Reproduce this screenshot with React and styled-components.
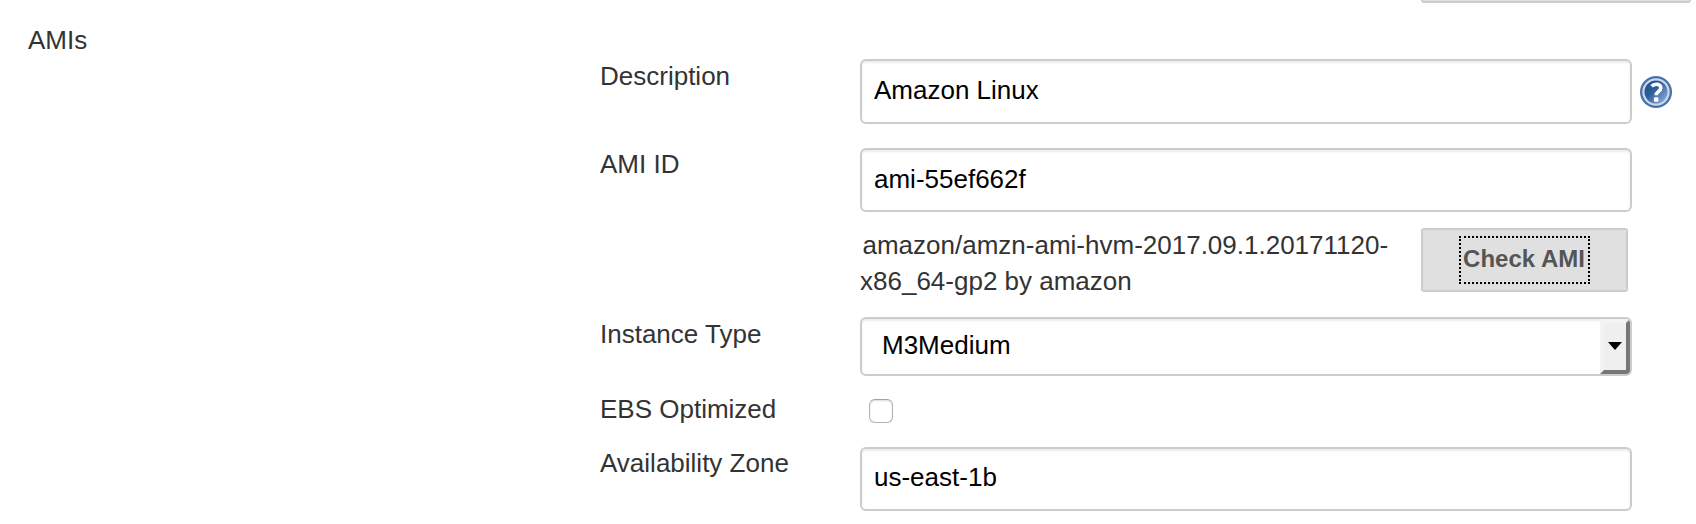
import React from "react";
import styled, { createGlobalStyle } from "styled-components";

const GlobalStyle = createGlobalStyle`
  *, *::before, *::after { box-sizing: border-box; }
  body {
    margin: 0;
    background: #fff;
    color: #333;
    font: 26px/36px "Liberation Sans", Arial, Helvetica, sans-serif;
  }
`;

const Page = styled.main`
  width: 1696px;
  height: 524px;
  overflow: hidden;
  display: flex;
  flex-direction: column;
`;

const PreviousRow = styled.div`
  height: 22px;
  display: flex;
  justify-content: flex-end;
  padding-right: 5px;
`;

const PreviousButton = styled.div`
  width: 270px;
  height: 3px;
  background: #e0e0e0;
  border: 2px solid #ccc;
  border-top: 0;
  border-radius: 0 0 3px 3px;
`;

const Section = styled.section`
  display: grid;
  grid-template-columns: 572px 1fr;
  padding-left: 28px;
`;

const SectionTitle = styled.div`
  height: 36px;
`;

const Fields = styled.div`
  padding-top: 36px;
`;

const Field = styled.div`
  display: grid;
  grid-template-columns: 260px 1fr;
  height: ${(p) => p.$height}px;
`;

const Control = styled.div`
  display: flex;
  align-items: flex-start;
  padding-top: ${(p) => p.$top || 0}px;
`;

const TextInput = styled.input`
  width: 772px;
  height: ${(p) => p.$height || 64}px;
  margin: 0;
  padding: 0 12px ${(p) => p.$bottom ?? 3}px;
  border: 2px solid #ccc;
  border-radius: 6px;
  background: #fff;
  box-shadow: inset 0 2px 2px rgba(0, 0, 0, 0.075);
  color: #000;
  font: inherit;
  outline: none;
`;

const Help = styled.svg`
  width: 32px;
  height: 32px;
  margin: 17px 0 0 8px;
`;

const Result = styled.div`
  width: 561px;
  text-indent: 2.5px;
  white-space: nowrap;
`;

const CheckButton = styled.button`
  width: 207px;
  height: 64px;
  margin: 1px 0 0;
  padding: 0 0 1px;
  display: flex;
  justify-content: center;
  align-items: center;
  border: 2px solid #ccc;
  border-radius: 3px;
  background: #e0e0e0;
  color: #555;
  font: bold 24px/36px "Liberation Sans", Arial, sans-serif;
`;

const FocusRing = styled.span`
  width: 131px;
  height: 48px;
  padding-bottom: 2px;
  display: flex;
  justify-content: center;
  align-items: center;
  border: 2px dotted #000;
  white-space: nowrap;
  margin-right: 1px;
`;

const Select = styled.div`
  width: 772px;
  height: 59px;
  display: flex;
  justify-content: space-between;
  border: 2px solid #ccc;
  border-radius: 6px;
  overflow: hidden;
  color: #000;
  box-shadow: inset 0 2px 2px rgba(0, 0, 0, 0.075);
`;

const SelectValue = styled.span`
  padding: 8px 0 0 20px;
`;

const SelectArrow = styled.span`
  width: 30px;
  padding-bottom: 2px;
  display: flex;
  align-items: center;
  justify-content: center;
  background: #efefef;
  border: 4px solid;
  border-color: #f3f3f3 #777 #777 #f3f3f3;
  border-radius: 0 4px 4px 0;
`;

const Checkbox = styled.input`
  appearance: none;
  width: 24px;
  height: 24px;
  margin: 0 0 0 9px;
  border: 1px solid #b4b4b4;
  border-top-color: #a2a2a2;
  border-radius: 6px;
  background: #fff;
  box-shadow: inset 0 1px 2px rgba(0, 0, 0, 0.14);
`;

function HelpIcon() {
  return (
    <Help viewBox="0 0 32 32" role="img" aria-label="Help">
      <defs>
        <linearGradient id="helpFill" x1="0.1" y1="0.1" x2="0.9" y2="0.9">
          <stop offset="0" stopColor="#22508f" />
          <stop offset="0.4" stopColor="#2e5d9c" />
          <stop offset="1" stopColor="#8fb0d8" />
        </linearGradient>
      </defs>
      <circle cx="16" cy="16" r="16" fill="#4771aa" />
      <circle cx="16" cy="16" r="12.6" fill="url(#helpFill)" stroke="#c9d7ea" strokeWidth="2.2" />
      <path
        d="M11.6 10.3C12.9 8.9 14.4 8.2 16.2 8.2c2.9 0 4.6 1.4 4.6 3.7 0 3.5-4.6 3.6-4.6 7.4"
        fill="none"
        stroke="#fff"
        strokeWidth="3.6"
      />
      <rect x="14" y="21.3" width="4.4" height="4.4" rx="0.8" fill="#fff" />
    </Help>
  );
}

export default function App() {
  return (
    <Page>
      <GlobalStyle />
      <PreviousRow>
        <PreviousButton />
      </PreviousRow>
      <Section>
        <SectionTitle>AMIs</SectionTitle>
        <Fields>
          <Field $height={88}>
            <label htmlFor="description">Description</label>
            <Control $top={1}>
              <TextInput id="description" $height={65} defaultValue="Amazon Linux" />
              <HelpIcon />
            </Control>
          </Field>
          <Field $height={81}>
            <label htmlFor="ami">AMI ID</label>
            <Control $top={2}>
              <TextInput id="ami" $bottom={1} defaultValue="ami-55ef662f" />
            </Control>
          </Field>
          <Field $height={89}>
            <span />
            <Control>
              <Result>
                amazon/amzn-ami-hvm-2017.09.1.20171120-
                <br />
                x86_64-gp2 by amazon
              </Result>
              <CheckButton type="button">
                <FocusRing>Check AMI</FocusRing>
              </CheckButton>
            </Control>
          </Field>
          <Field $height={75}>
            <span>Instance Type</span>
            <Control $top={1}>
              <Select>
                <SelectValue>M3Medium</SelectValue>
                <SelectArrow>
                  <svg width="14" height="8" viewBox="0 0 14 8">
                    <path d="M0 0h14L7 8z" fill="#000" />
                  </svg>
                </SelectArrow>
              </Select>
            </Control>
          </Field>
          <Field $height={54}>
            <label htmlFor="ebs">EBS Optimized</label>
            <Control $top={8}>
              <Checkbox id="ebs" type="checkbox" />
            </Control>
          </Field>
          <Field $height={79}>
            <label htmlFor="zone">Availability Zone</label>
            <Control $top={2}>
              <TextInput id="zone" defaultValue="us-east-1b" />
            </Control>
          </Field>
        </Fields>
      </Section>
    </Page>
  );
}
